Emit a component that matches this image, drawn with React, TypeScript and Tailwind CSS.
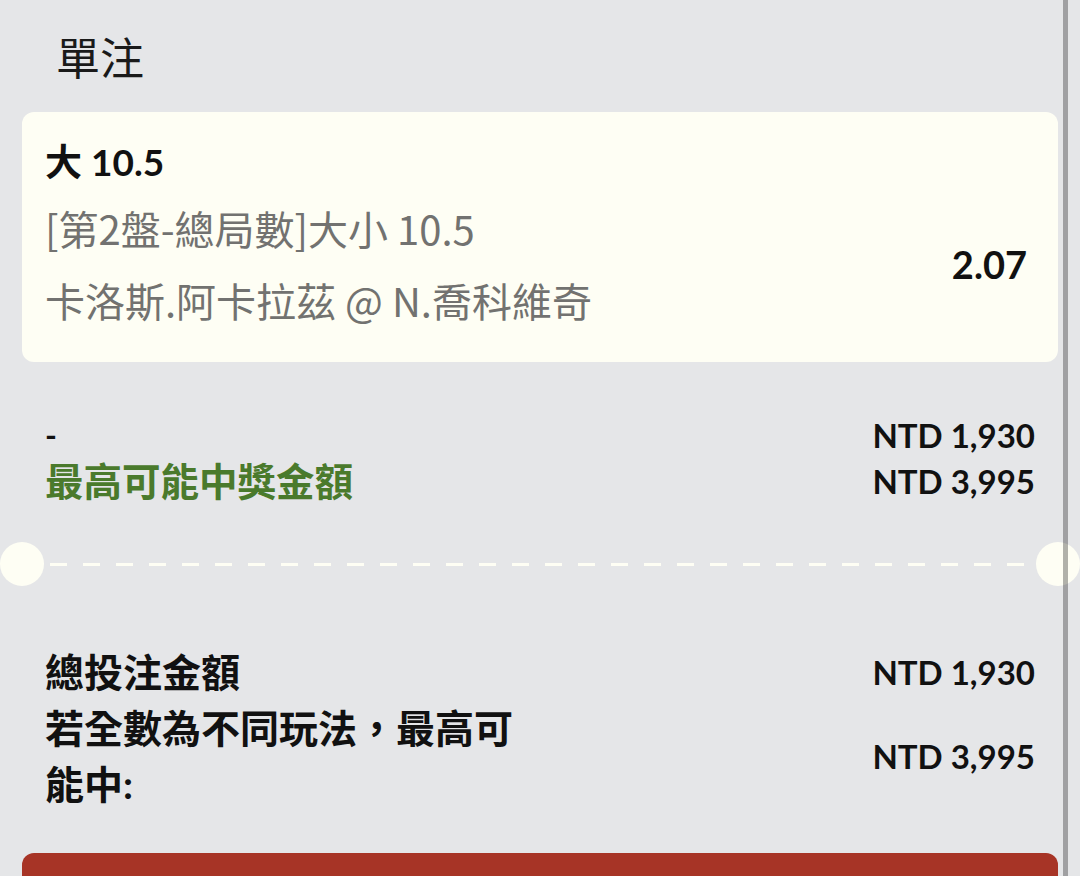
import React from 'react';

const font = "font-['Lato','Noto_Sans_CJK_TC',sans-serif]";
const cjk = "font-['Noto_Sans_CJK_TC','Noto_Sans',sans-serif]";

const App: React.FC = () => {
    return (
        <div className={`relative h-[876px] w-[1080px] overflow-hidden bg-[#e5e6e8] text-[#111] ${font}`}>
            <div className="flex h-[112px] items-center pl-[56px]">
                <h1 className={`text-[44px] font-normal leading-none text-[#1a1a1a] ${cjk}`}>單注</h1>
            </div>

            <div className="px-[22px]">
                {/* selection card */}
                <div className="h-[250px] rounded-xl bg-[#fefef4] px-[23px] pt-[28px]">
                    <div className="text-[37px] font-bold leading-[44px]">大 10.5</div>
                    <div className="mt-[8px] flex items-center justify-between">
                        <div className={`text-[40px] leading-[72px] text-[#727270] ${cjk}`}>
                            <div>[第2盤-總局數]大小 10.5</div>
                            <div>卡洛斯.阿卡拉茲 @ N.喬科維奇</div>
                        </div>
                        <div className="pr-[8px] text-[38px] font-bold leading-none">2.07</div>
                    </div>
                </div>

                {/* stake / possible win */}
                <div className="mt-[50px] flex justify-between px-[23px] leading-[46px]">
                    <div className="font-bold">
                        <div className="text-[32px]">-</div>
                        <div className="text-[38.5px] text-[#4a7a2c]">最高可能中獎金額</div>
                    </div>
                    <div className="text-right text-[33px] font-bold">
                        <div>NTD 1,930</div>
                        <div>NTD 3,995</div>
                    </div>
                </div>
            </div>

            {/* ticket divider */}
            <div className="mt-[38px] flex h-[44px] items-center">
                <div className="h-[44px] w-[44px] shrink-0 rounded-full bg-[#fefef4]" />
                <div className="mx-[6px] h-[3px] flex-1 bg-[repeating-linear-gradient(to_right,#fefef4_0_17px,transparent_17px_33px)]" />
                <div className="h-[44px] w-[44px] shrink-0 rounded-full bg-[#fefef4]" />
            </div>

            {/* totals */}
            <div className="px-[45px] pt-[58px] font-bold">
                <div className="flex items-center justify-between leading-[56px]">
                    <div className="text-[39px]">總投注金額</div>
                    <div className="text-[33px]">NTD 1,930</div>
                </div>
                <div className="flex items-center justify-between leading-[56px]">
                    <div className="w-[480px] text-[39px]">若全數為不同玩法，最高可能中:</div>
                    <div className="text-[33px]">NTD 3,995</div>
                </div>
            </div>

            <div className="px-[22px] pt-[41px]">
                <div className="h-[60px] rounded-t-xl bg-[#a73426]" />
            </div>

            {/* scrollbar */}
            <div className="absolute right-[12px] top-0 h-full w-[5px] bg-black/30" />
        </div>
    );
};

export default App;
